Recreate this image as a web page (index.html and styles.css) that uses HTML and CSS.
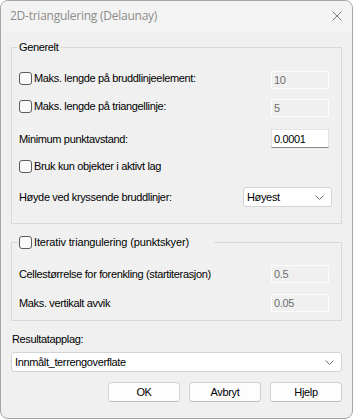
FILE: index.html
```html
<!DOCTYPE html>
<html lang="no">
<head>
  <meta charset="UTF-8">
  <title>2D-triangulering (Delaunay)</title>
  <link rel="stylesheet" href="styles.css">
</head>
<body>

  <div class="window">
    <div class="titlebar">
      <span class="title">2D-triangulering (Delaunay)</span>
      <svg class="close" width="10" height="10" viewBox="0 0 10 10">
        <path d="M0.5 0.5 L9.5 9.5 M9.5 0.5 L0.5 9.5" stroke="#7a7a7a" stroke-width="1" fill="none"/>
      </svg>
    </div>

    <div class="content">
      <fieldset class="group group-general">
        <legend>Generelt</legend>
        <div class="row row-1">
          <label class="check"><span class="box"></span>Maks. lengde på bruddlinjeelement:</label>
          <span class="field disabled">10</span>
        </div>
        <div class="row row-2">
          <label class="check"><span class="box"></span>Maks. lengde på triangellinje:</label>
          <span class="field disabled">5</span>
        </div>
        <div class="row row-3">
          <span class="text">Minimum punktavstand:</span>
          <span class="field active">0.0001</span>
        </div>
        <div class="row row-4">
          <label class="check"><span class="box"></span>Bruk kun objekter i aktivt lag</label>
        </div>
        <div class="row row-5">
          <span class="text">Høyde ved kryssende bruddlinjer:</span>
          <span class="combo combo-small">Høyest
            <svg class="chevron" width="9" height="5" viewBox="0 0 9 5"><path d="M0.5 0.5 L4.5 4.5 L8.5 0.5" stroke="#707070" fill="none"/></svg>
          </span>
        </div>
      </fieldset>

      <fieldset class="group group-iter">
        <legend><label class="check"><span class="box"></span>Iterativ triangulering (punktskyer)</label></legend>
        <div class="row row-6">
          <span class="text">Cellestørrelse for forenkling (startiterasjon)</span>
          <span class="field disabled">0.5</span>
        </div>
        <div class="row row-7">
          <span class="text">Maks. vertikalt avvik</span>
          <span class="field disabled">0.05</span>
        </div>
      </fieldset>

      <div class="result-label">Resultatapplag:</div>
      <div class="combo combo-wide">Innmålt_terrengoverflate
        <svg class="chevron" width="9" height="5" viewBox="0 0 9 5"><path d="M0.5 0.5 L4.5 4.5 L8.5 0.5" stroke="#707070" fill="none"/></svg>
      </div>

      <div class="buttons">
        <button>OK</button>
        <button>Avbryt</button>
        <button>Hjelp</button>
      </div>
    </div>
  </div>

</body>
</html>
```

FILE: styles.css
```css
body {
  margin: 0;
  background-color: #ffffff;
  font-family: "Liberation Sans", Arial, sans-serif;
  font-size: 11px;
  letter-spacing: -0.35px;
  color: #000;
}
.window {
  box-sizing: border-box;
  width: 353px;
  height: 419px;
  border: 1px solid #a6a6a6;
  border-radius: 8px;
  overflow: hidden;
  background-color: #f0f0f0;
}
.titlebar {
  height: 30px;
  background-color: #f3f3f3;
  display: flex;
  align-items: center;
  justify-content: space-between;
  padding: 0 10px 0 9px;
}
.title {
  font-family: "Open Sans", "Noto Sans", sans-serif;
  font-size: 12px;
  letter-spacing: -0.25px;
  color: #8c8c8c;
  margin-top: -1px;
}
.close {
  margin-top: -1px;
}
.content {
  padding: 9px 10px 0 10px;
}
.group {
  margin: 0;
  padding: 0 11px 0 7px;
  border: 1px solid #d9d9d9;
}
legend {
  line-height: 14px;
  padding: 0 2px;
  margin-left: -2px;
}
.group-general {
  padding-top: 17px;
  padding-bottom: 16px;
}
.group-iter {
  margin-top: 11px;
  padding-top: 16px;
  padding-bottom: 8px;
}
.group-iter legend {
  width: 196px;
  box-sizing: border-box;
  margin-left: -1px;
  padding: 0 0 0 1px;
  letter-spacing: -0.15px;
}
.row {
  display: flex;
  align-items: center;
  justify-content: space-between;
  height: 18px;
}
.row-2 { margin-top: 10px; }
.row-3 { margin-top: 12px; height: 19px; }
.row-4 { margin-top: 9px; }
.row-5 { margin-top: 12px; height: 20px; }
.row-7 { margin-top: 11px; }
.row-1 .check, .row-2 .check {
  margin-bottom: 4px;
}
.check {
  display: flex;
  align-items: center;
  gap: 2px;
}
.box {
  box-sizing: border-box;
  width: 13px;
  height: 13px;
  border: 1px solid #5c5c5c;
  border-radius: 3px;
  background-color: #f9f9f9;
}
.field {
  box-sizing: border-box;
  width: 58px;
  height: 100%;
  margin-right: 1px;
  padding: 0 2px;
  display: flex;
  align-items: center;
}
.field.disabled {
  background-color: #f0f0f0;
  border: 1px solid #fbfbfb;
  color: #6d6d6d;
}
.field.active {
  background-color: #fff;
  border: 1px solid #e3e3e3;
  border-bottom-color: #8a8a8a;
}
.combo {
  box-sizing: border-box;
  height: 20px;
  background-color: #fff;
  border: 1px solid #d3d3d3;
  border-radius: 3px;
  display: flex;
  align-items: center;
  justify-content: space-between;
  padding: 0 7px 0 3px;
}
.combo-small {
  width: 89px;
  margin-right: -2px;
}
.result-label {
  margin-top: 11px;
  line-height: 14px;
  padding-left: 1px;
}
.combo-wide {
  margin-top: 6px;
  width: 331px;
}
.buttons {
  display: flex;
  justify-content: flex-end;
  gap: 9px;
  margin-top: 10px;
}
button {
  width: 72px;
  height: 20px;
  font-family: "Liberation Sans", Arial, sans-serif;
  font-size: 11px;
  letter-spacing: -0.35px;
  color: #000;
  background-color: #fdfdfd;
  border: 1px solid #d0d0d0;
  border-bottom-color: #bdbdbd;
  border-radius: 4px;
  padding: 0;
}
```
